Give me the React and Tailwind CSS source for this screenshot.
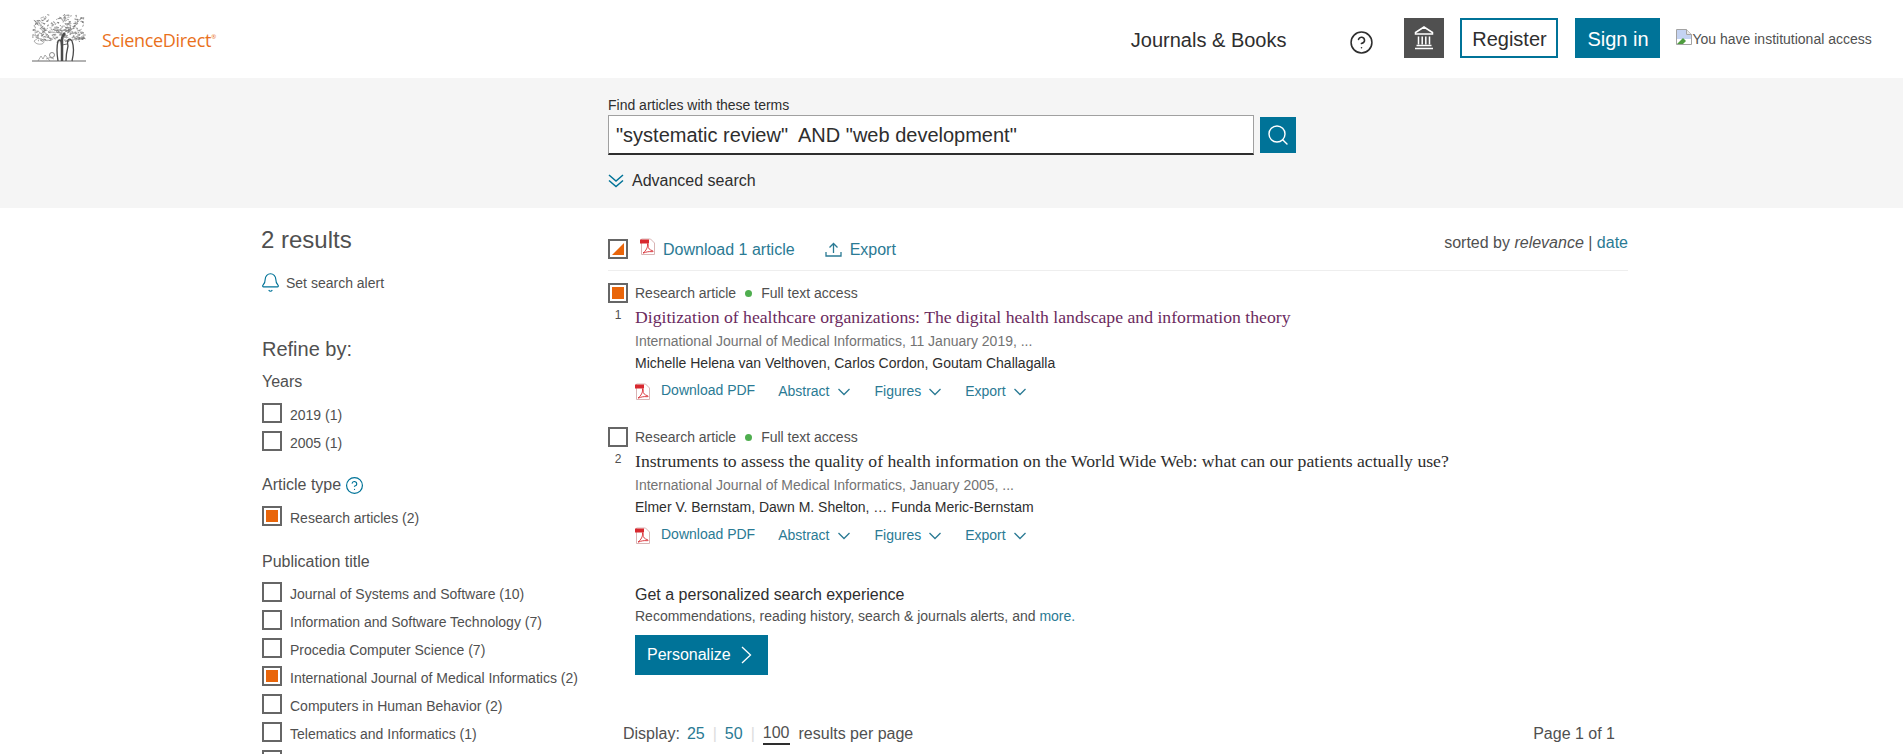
import { Bell, CircleHelp, Search } from 'lucide-react';

const linkColor = 'text-[#2a7a94]';

// pseudo random scribbles for the engraved tree crown
const crownPaths = () => {
    const paths = [];
    let seed = 7;
    const rnd = () => {
        seed = (seed * 16807) % 2147483647;
        return seed / 2147483647;
    };
    for (let i = 0; i < 240; i++) {
        const x = rnd() * 52 + 1;
        const y = rnd() * 27 + 1;
        const dx = (x - 27) / 27;
        const dy = (y - 15) / 14;
        if (dx * dx * dx * dx + dy * dy * dy * dy > 1) continue;
        if (dy > 0.4 && dx < 0.6 && dx > -0.1 && rnd() > 0.4) continue;
        paths.push(`M${x.toFixed(1)} ${y.toFixed(1)}q${(rnd() * 4 - 2).toFixed(1)} ${(rnd() * 3 - 1.5).toFixed(1)} ${(rnd() * 5 - 2.5).toFixed(1)} ${(rnd() * 2 - 1).toFixed(1)}t${(rnd() * 3 - 1.5).toFixed(1)} ${(rnd() * 2 - 1).toFixed(1)}`);
    }
    return paths;
};

const TreeLogo = () => (
    <svg width="54" height="48" viewBox="0 0 54 48" fill="none" className="shrink-0">
        <g stroke="#777" strokeWidth="0.6">
            {crownPaths().map((d, i) => <path key={i} d={d} />)}
            <path d="M2 27q3-4 8-2q4 3 0 5q-6 1-8-3z" />
            <path d="M0 47h54" stroke="#555" strokeWidth="0.9" />
            <path d="M6 47l3-5l2 3l2-4l5 6" />
            <path d="M14 45q4-3 8 0" />
        </g>
        <g stroke="#4a4a4a" strokeWidth="1.300">
            <path d="M30 47V26q0-4 3-7" strokeWidth="2.500" />
            <path d="M26 47q-2-12 0-20q2-2 3 0q2 10 1 20" />
            <path d="M40 47q3-12 0-20q-2-3-4-1q-1 3 0 6q-2 8-2 15" />
            <path d="M30 31l5-1" strokeWidth="0.8" />
        </g>
        <circle cx="20" cy="41" r="2.500" stroke="#6f6f6f" strokeWidth="0.8" />
    </svg>
);

const PdfIcon = () => (
    <svg width="16" height="17" viewBox="0 0 16 17" fill="none" className="shrink-0">
        <path d="M1.500 1h9l4 4v11.500h-13z" fill="#fff" stroke="#d9b4b4" strokeWidth="1" />
        <rect x="0" y="1.500" width="9" height="4" fill="#d8282f" />
        <path d="M3 15c3-2 5-6 4.500-9c0-1 1 0 .6 2c-.4 2 1.800 4.200 4.400 4.700c1.200.300 .800 1.200-.500 1c-3-.400-6 .300-8.500 1.300z" stroke="#d8282f" strokeWidth="0.9" fill="none" />
    </svg>
);

const BrokenImage = () => (
    <svg width="16" height="16" viewBox="0 0 16 16" className="shrink-0">
        <path d="M.500.500h10l5 5v10H.500z" fill="#fff" stroke="#a3a3a3" />
        <path d="M1 1h9v5h5v4H1z" fill="#c4d3f2" />
        <path d="M1 15l6-6l3 3l-3 3z" fill="#4f9d3f" />
        <path d="M10.500.500v5h5" fill="#e8e8e8" stroke="#a3a3a3" />
    </svg>
);

const Landmark = () => (
    <svg width="24" height="26" viewBox="0 0 24 26" fill="none" stroke="#fff" strokeWidth="1.500">
        <path d="M12 2L3.500 7.500v1.500h17V7.500z" />
        <path d="M6.500 11.500v8M10.200 11.500v8M13.800 11.500v8M17.500 11.500v8" />
        <path d="M4.500 20.500h15M3 23.500h18" />
    </svg>
);

const UploadIcon = () => (
    <svg width="17" height="15" viewBox="0 0 17 15" fill="none" stroke="#2a7a94" strokeWidth="1.300" className="shrink-0">
        <path d="M8.500 11V2M4.500 5.500l4-4l4 4M1 10v4h15v-4" />
    </svg>
);

const DoubleChevron = () => (
    <svg width="16" height="14" viewBox="0 0 16 14" fill="none" stroke="#007398" strokeWidth="1.500" className="shrink-0">
        <path d="M1 1l7 6l7-6M1 6.500l7 6l7-6" />
    </svg>
);

const SmallChevron = () => (
    <svg width="12" height="8" viewBox="0 0 12 8" fill="none" stroke="currentColor" strokeWidth="1.300" className="shrink-0">
        <path d="M.5 1l5.500 5.500L11.500 1" />
    </svg>
);

const Checkbox = ({ checked, partial }) => (
    <span className="w-5 h-5 shrink-0 border-2 border-[#666] bg-white flex items-center justify-center">
        {checked && <span className="w-3 h-3 bg-[#e9650a]" />}
        {partial && (
            <svg width="12" height="12" viewBox="0 0 12 12">
                <path d="M12 0v12H0z" fill="#e9650a" />
            </svg>
        )}
    </span>
);

const Filter = ({ label, checked }) => (
    <div className="h-[28px] flex items-start gap-[8px]">
        <Checkbox checked={checked} />
        <span className="text-[14px] leading-[24px] text-[#505050] whitespace-nowrap">{label}</span>
    </div>
);

const DropLink = ({ label, className }) => (
    <span className={`flex items-center gap-[8px] ${className}`}>
        {label}
        <SmallChevron />
    </span>
);

const Result = ({ number, title, titleColor, journal, authors, checked }) => (
    <div className="h-[144px] flex">
        <div className="w-[27px] shrink-0 flex flex-col items-start">
            <Checkbox checked={checked} />
            <span className="w-5 mt-[5px] text-center text-[12px] leading-[14px] text-[#505050]">{number}</span>
        </div>
        <div>
            <div className="h-[20px] flex items-center text-[14px] text-[#505050]">
                Research article
                <span className="w-[7px] h-[7px] rounded-full bg-[#4fae4f] mx-[9px]" />
                Full text access
            </div>
            <div className={`mt-[2px] h-[24px] leading-[24px] text-[17.700px] font-['Liberation_Serif',serif] whitespace-nowrap ${titleColor}`}>{title}</div>
            <div className="h-[24px] leading-[24px] text-[14px] text-[#737373]">{journal}</div>
            <div className="h-[20px] leading-[20px] text-[14px] text-[#2e2e2e]">{authors}</div>
            <div className={`mt-[8px] flex items-center text-[14px] ${linkColor}`}>
                <PdfIcon />
                <span className="ml-[10px] -mt-[2px]">Download PDF</span>
                <DropLink label="Abstract" className="ml-[23px]" />
                <DropLink label="Figures" className="ml-[25px]" />
                <DropLink label="Export" className="ml-[24px]" />
            </div>
        </div>
    </div>
);

const App = () => {
    return (
        <div className="h-screen overflow-hidden bg-white font-['Liberation_Sans',Arial,sans-serif] text-[#2e2e2e]">
            <header className="h-[78px] pb-[2px] flex items-center pl-[32px]">
                <TreeLogo />
                <div className="ml-[16px] mt-[4px] text-[18px] text-[#e9711c] font-['Open_Sans',sans-serif] tracking-[-0.3px]">
                    ScienceDirect<sup className="text-[6px] top-[-8px]">®</sup>
                </div>
                <div className="ml-[915px] mt-[4px] text-[20px]">Journals &amp; Books</div>
                <CircleHelp size={25} strokeWidth={1.500} className="ml-[63px] mt-[8px] text-[#2e2e2e]" />
                <div className="ml-[30px] w-[40px] h-[40px] bg-[#505050] flex items-center justify-center">
                    <Landmark />
                </div>
                <div className="ml-[16px] w-[98px] h-[40px] pt-[1px] border-2 border-[#007398] flex items-center justify-center text-[20px]">Register</div>
                <div className="ml-[17px] w-[85px] h-[40px] pt-[1px] bg-[#007398] text-white flex items-center justify-center text-[20px]">Sign in</div>
                <div className="ml-[16px] -mt-[1px] flex items-start text-[14px] leading-[16px] text-[#505050] whitespace-nowrap">
                    <BrokenImage />
                    <span className="mt-[2px]">You have institutional access</span>
                </div>
            </header>

            <section className="h-[130px] bg-[#f5f5f5] pl-[608px] pt-[17px]">
                <div className="text-[14px] leading-[20px]">Find articles with these terms</div>
                <div className="flex items-center">
                    <div className="w-[646px] h-[40px] bg-white border border-[#a0a0a0] border-b-[2px] border-b-[#2e2e2e] pl-[7px] flex items-center text-[20px] whitespace-pre">
                        "systematic review"  AND "web development"
                    </div>
                    <div className="ml-[6px] w-[36px] h-[36px] bg-[#007398] flex items-center justify-center">
                        <Search size={24} strokeWidth={1.400} className="text-white" />
                    </div>
                </div>
                <div className="mt-[14px] flex items-center text-[16px] leading-[24px]">
                    <DoubleChevron />
                    <span className="ml-[8px]">Advanced search</span>
                </div>
            </section>

            <main className="flex pl-[262px]">
                <aside className="w-[346px] shrink-0 pt-[18px]">
                    <h1 className="text-[24px] leading-[28px] text-[#505050] -ml-[1px]">2 results</h1>
                    <div className="mt-[17px] h-[24px] flex items-center text-[14px] text-[#505050]">
                        <Bell size={21} strokeWidth={1.300} className="text-[#007398] -ml-[2px] -mt-[2px]" />
                        <span className="ml-[5px]">Set search alert</span>
                    </div>
                    <h2 className="mt-[40px] text-[20px] leading-[28px] text-[#505050]">Refine by:</h2>
                    <h3 className="mt-[7px] text-[16px] leading-[24px] text-[#505050]">Years</h3>
                    <div className="mt-[9px]">
                        <Filter label="2019 (1)" />
                        <Filter label="2005 (1)" />
                    </div>
                    <h3 className="mt-[14px] h-[24px] flex items-center text-[16px] text-[#505050]">
                        Article type
                        <CircleHelp size={19} strokeWidth={1.500} className="ml-[4px] text-[#007398]" />
                    </h3>
                    <div className="mt-[9px]">
                        <Filter label="Research articles (2)" checked />
                    </div>
                    <h3 className="mt-[16px] h-[24px] leading-[24px] text-[16px] text-[#505050]">Publication title</h3>
                    <div className="mt-[8px]">
                        <Filter label="Journal of Systems and Software (10)" />
                        <Filter label="Information and Software Technology (7)" />
                        <Filter label="Procedia Computer Science (7)" />
                        <Filter label="International Journal of Medical Informatics (2)" checked />
                        <Filter label="Computers in Human Behavior (2)" />
                        <Filter label="Telematics and Informatics (1)" />
                        <Filter label="" />
                    </div>
                </aside>

                <div className="w-[1020px] shrink-0 pt-[31px]">
                    <div className="h-[31px] flex items-start border-b border-[#eeeeee] box-content">
                        <Checkbox partial />
                        <span className="ml-[12px] -mt-[1px]"><PdfIcon /></span>
                        <span className={`ml-[7px] mt-[1px] text-[16px] leading-[20px] ${linkColor}`}>Download 1 article</span>
                        <span className="ml-[30px] mt-[3px]"><UploadIcon /></span>
                        <span className={`ml-[8px] mt-[1px] text-[16px] leading-[20px] ${linkColor}`}>Export</span>
                        <span className="ml-auto -mt-[6px] text-[16px] leading-[20px] text-[#505050]">
                            sorted by <em>relevance</em> | <span className={linkColor}>date</span>
                        </span>
                    </div>
                    <div className="pt-[12px]">
                        <Result
                            number="1"
                            checked
                            title="Digitization of healthcare organizations: The digital health landscape and information theory"
                            titleColor="text-[#6b2a5e]"
                            journal="International Journal of Medical Informatics, 11 January 2019, ..."
                            authors="Michelle Helena van Velthoven, Carlos Cordon, Goutam Challagalla"
                        />
                        <Result
                            number="2"
                            title="Instruments to assess the quality of health information on the World Wide Web: what can our patients actually use?"
                            titleColor="text-[#2e2e2e]"
                            journal="International Journal of Medical Informatics, January 2005, ..."
                            authors="Elmer V. Bernstam, Dawn M. Shelton, … Funda Meric-Bernstam"
                        />
                    </div>
                    <div className="pl-[27px] mt-[12px]">
                        <div className="text-[16px] leading-[24px]">Get a personalized search experience</div>
                        <div className="text-[14px] leading-[20px] -mt-[1px] text-[#505050]">
                            Recommendations, reading history, search &amp; journals alerts, and <span className={linkColor}>more.</span>
                        </div>
                        <div className="mt-[9px] w-[133px] h-[40px] bg-[#007398] text-white flex items-center pl-[12px] text-[16px]">
                            Personalize
                            <svg width="11" height="18" viewBox="0 0 11 18" fill="none" stroke="#fff" strokeWidth="1.300" className="ml-[10px]">
                                <path d="M1 1l8.500 8L1 17" />
                            </svg>
                        </div>
                    </div>
                    <div className="mt-[47px] pl-[15px] pr-[13px] flex items-center text-[16px] leading-[24px] text-[#505050]">
                        Display:
                        <span className={`ml-[7px] ${linkColor}`}>25</span>
                        <span className="mx-[8px] text-[#dddddd]">|</span>
                        <span className={linkColor}>50</span>
                        <span className="mx-[8px] text-[#dddddd]">|</span>
                        <span className="border-b-2 border-[#2e2e2e] leading-[20px]">100</span>
                        <span className="ml-[9px]">results per page</span>
                        <span className="ml-auto">Page 1 of 1</span>
                    </div>
                </div>
            </main>
        </div>
    );
};

export default App;
